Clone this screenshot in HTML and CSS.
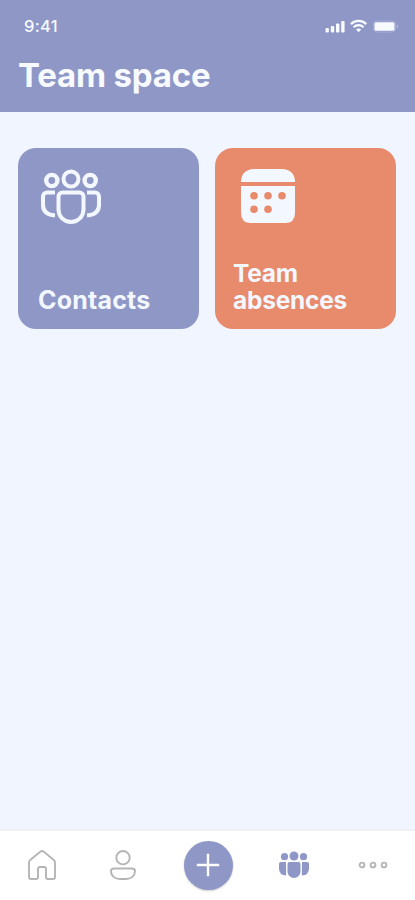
FILE: index.html
```html
<!DOCTYPE html>
<html lang="en">
<head>
<meta charset="utf-8">
<title>Team space</title>
<link rel="stylesheet" href="styles.css">
</head>
<body>
<div class="app">
  <header class="header">
    <div class="status">
      <span class="time">9:41</span>
      <svg class="signals" width="74" height="14" viewBox="0 0 74 14" fill="currentColor">
        <rect x="0.5" y="9" width="3.400" height="4.500" rx="1"/>
        <rect x="5.800" y="7" width="3.400" height="6.500" rx="1"/>
        <rect x="11" y="4.500" width="3.400" height="9" rx="1"/>
        <rect x="16.200" y="2" width="3.400" height="11.500" rx="1"/>
        <g fill="none" stroke="currentColor" stroke-width="2.200">
          <path d="M25.900 5.100a11 11 0 0 1 15.400 0"/>
          <path d="M28.600 8.300a7 7 0 0 1 10 0"/>
        </g>
        <path d="M31 10.600q2.600-2 5.200 0L33.600 13.300z"/>
        <rect x="48.500" y="2" width="22" height="11" rx="3" fill="none" stroke="currentColor" opacity=".2"/>
        <rect x="49.500" y="3.200" width="20" height="8.600" rx="1.500"/>
        <path d="M71.800 5.500v4q1.500-.6 1.500-2t-1.500-2z" opacity=".35"/>
      </svg>
    </div>
    <h1 class="title">Team space</h1>
  </header>

  <main class="cards">
    <a class="card contacts">
      <svg class="card-icon" width="60" height="56" viewBox="0 0 60 56" fill="none" stroke="currentColor" stroke-width="4">
        <circle cx="30" cy="10" r="7.500"/>
        <circle cx="10.800" cy="11.500" r="5.600" stroke-width="4.400"/>
        <circle cx="49.200" cy="11.500" r="5.600" stroke-width="4.400"/>
        <path d="M21.500 23.500h17a4 4 0 0 1 4 4V40.500a12.500 12.500 0 0 1-25 0V27.500a4 4 0 0 1 4-4z"/>
        <path d="M14 23.500H6a4 4 0 0 0-4 4V36q0 9.500 12 10.500"/>
        <path d="M46 23.500h8a4 4 0 0 1 4 4V36q0 9.500-12 10.500"/>
      </svg>
      <span class="label">Contacts</span>
    </a>
    <a class="card absences">
      <svg class="card-icon" width="54" height="54" viewBox="0 0 54 54" fill="currentColor">
        <path d="M0 13C0 5 5 0 13 0h28c8 0 13 5 13 13z"/>
        <path d="M0 17h54v27q0 10-10 10H10Q0 54 0 44z"/>
        <g class="dots">
          <circle cx="13" cy="26.800" r="3.800"/><circle cx="27" cy="26.800" r="3.800"/><circle cx="41" cy="26.800" r="3.800"/>
          <circle cx="13" cy="40.200" r="3.800"/><circle cx="27" cy="40.200" r="3.800"/>
        </g>
      </svg>
      <span class="label">Team<br>absences</span>
    </a>
  </main>

  <nav class="nav">
    <a class="tab">
      <svg width="28" height="30" viewBox="0 0 28 30" fill="none" stroke="currentColor" stroke-width="1.900" stroke-linejoin="round">
        <path d="M1 12.500q0-1.500 1.200-2.500L12.500 1.600q1.500-1.200 3 0L25.800 10q1.200 1 1.200 2.500V27q0 2-2 2h-5q-2 0-2-2v-8q0-2-2-2h-4q-2 0-2 2v8q0 2-2 2H3q-2 0-2-2z"/>
      </svg>
    </a>
    <a class="tab">
      <svg width="26" height="30" viewBox="0 0 26 30" fill="none" stroke="currentColor" stroke-width="1.900">
        <circle cx="13" cy="7.700" r="6.700"/>
        <path d="M4 18.500h18q3 0 3 2.500c0 5-4 8-9 8h-6c-5 0-9-3-9-8q0-2.500 3-2.500z"/>
      </svg>
    </a>
    <a class="tab add">
      <svg width="24" height="24" viewBox="0 0 24 24" fill="none" stroke="currentColor" stroke-width="2.400">
        <path d="M12 .8v22.400M.8 12h22.400"/>
      </svg>
    </a>
    <a class="tab active">
      <svg width="30" height="28" viewBox="0 0 30 28" fill="currentColor">
        <circle cx="15" cy="5" r="4.500"/><circle cx="5.500" cy="5.700" r="3.600"/><circle cx="24.500" cy="5.700" r="3.600"/>
        <path d="M10.500 11h9q2 0 2 2v7.500a6.500 6.500 0 0 1-13 0V13q0-2 2-2z"/>
        <path d="M7 11H2q-2 0-2 2v4.500q0 6.500 7.200 7z"/>
        <path d="M23 11h5q2 0 2 2v4.500q0 6.500-7.200 7z"/>
      </svg>
    </a>
    <a class="tab">
      <svg width="30" height="8" viewBox="0 0 30 8" fill="none" stroke="currentColor" stroke-width="1.900">
        <circle cx="4" cy="4" r="2.400"/><circle cx="15" cy="4" r="2.400"/><circle cx="26" cy="4" r="2.400"/>
      </svg>
    </a>
  </nav>
</div>
</body>
</html>
```
FILE: styles.css
```css
* {
  box-sizing: border-box;
}

body {
  margin: 0;
  font-family: Inter, "Liberation Sans", sans-serif;
  background: #f1f5ff;
}

svg {
  display: block;
}

.app {
  display: flex;
  flex-direction: column;
  height: 900px;
}

.header {
  height: 112px;
  padding: 17px 16px 0 18px;
  background: #8f97c7;
  color: #f7faff;
}

.status {
  display: flex;
  justify-content: space-between;
  align-items: center;
  height: 18px;
  padding-left: 6px;
}

.time {
  font-size: 16.5px;
  font-weight: 500;
  letter-spacing: 0.3px;
}

.title {
  margin: 19px 0 0;
  font-size: 33px;
  line-height: 42px;
  font-weight: 700;
  letter-spacing: -0.2px;
  white-space: nowrap;
}

.cards {
  flex: 1;
  display: grid;
  grid-template-columns: 181px 181px;
  grid-auto-rows: 181px;
  gap: 16px;
  padding: 36px 18px;
}

.card {
  display: flex;
  flex-direction: column;
  justify-content: space-between;
  padding: 21px 18px 15px;
  border-radius: 18px;
  color: #f3f7ff;
}

.contacts {
  padding-left: 20px;
  background: #8f97c7;
}

.absences {
  background: #e88a6c;
}

.contacts .card-icon {
  margin-left: 3px;
}

.absences .card-icon {
  margin-left: 8px;
}

.dots {
  fill: #e88a6c;
}

.label {
  font-size: 25px;
  line-height: 27px;
  font-weight: 650;
}

.contacts .label {
  letter-spacing: 0.2px;
}

.absences .label {
  font-size: 24.5px;
  letter-spacing: -0.25px;
}

.nav {
  display: grid;
  grid-template-columns: 84px 77px 94px 78px 80px;
  align-items: center;
  height: 71px;
  padding-bottom: 1px;
  border-top: 2px solid #eff0f3;
  background: #fff;
  color: #b5b5b5;
}

.tab {
  display: flex;
  justify-content: center;
}

.add {
  justify-self: center;
  align-items: center;
  width: 49px;
  height: 49px;
  border-radius: 50%;
  background: #8f97c7;
  color: #fff;
  box-shadow: 0 1px 2px #0003;
}

.active {
  color: #8f97c7;
}
```
